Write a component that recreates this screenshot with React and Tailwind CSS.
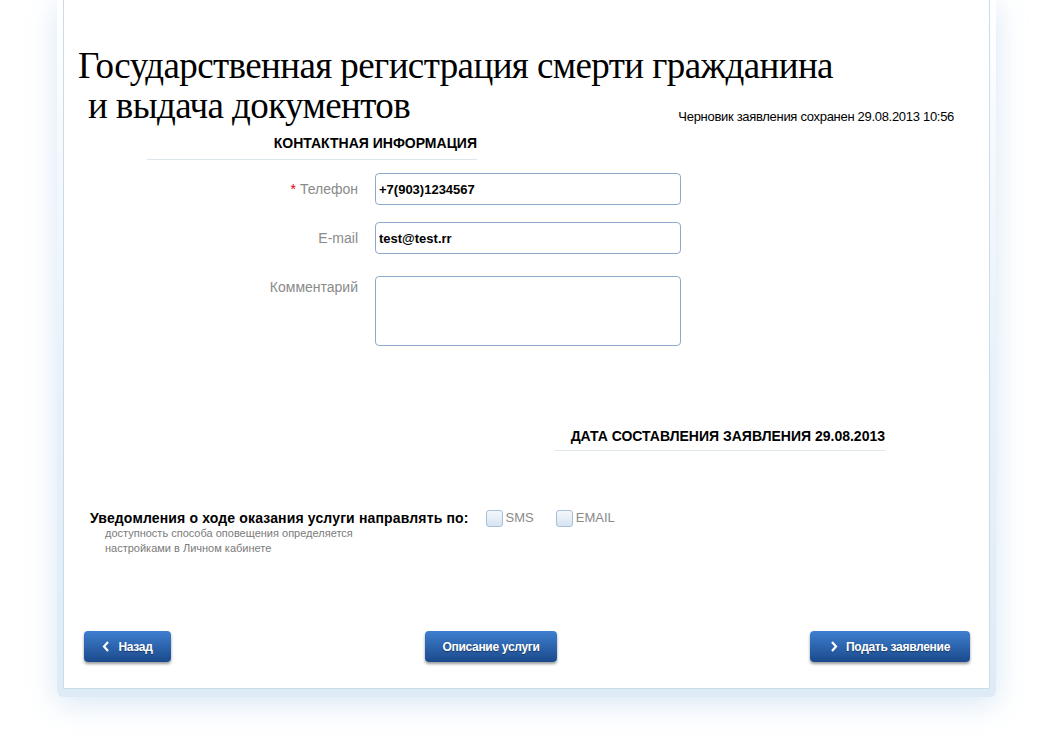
import { useState } from "react";

const sans = "font-['Liberation_Sans',Arial,sans-serif]";

function Chevron({ dir = "left" }) {
  return (
    <svg width="8" height="11" viewBox="0 0 8 11" className="shrink-0">
      <polyline
        points={dir === "left" ? "6,1 2,5.5 6,10" : "2,1 6,5.5 2,10"}
        fill="none"
        stroke="white"
        strokeWidth="2.2"
      />
    </svg>
  );
}

function BlueButton({ children, className = "" }) {
  return (
    <button
      className={`h-[31px] flex items-center justify-center gap-[8px] rounded-[4px] bg-gradient-to-b from-[#3f7fd0] to-[#1b4a8c] text-white text-[12px] font-bold tracking-[-0.3px] shadow-[0_2px_3px_rgba(0,0,0,0.4)] [text-shadow:0_1px_1px_rgba(0,0,0,0.4)] ${className}`}
    >
      {children}
    </button>
  );
}

function Checkbox({ label, checked, onChange }) {
  return (
    <label className="flex items-center gap-[3px] cursor-pointer">
      <span
        onClick={onChange}
        className="w-[17px] h-[17px] rounded-[3px] border border-[#a8bfd8] bg-gradient-to-b from-[#f5f8fc] to-[#d6e3f1] flex items-center justify-center text-[11px] text-[#1b4a8c]"
      >
        {checked ? "✓" : ""}
      </span>
      <span className="text-[13px] leading-[16px] text-[#8a8a8a]">{label}</span>
    </label>
  );
}

export default function App() {
  const [phone, setPhone] = useState("+7(903)1234567");
  const [email, setEmail] = useState("test@test.rr");
  const [sms, setSms] = useState(false);
  const [mail, setMail] = useState(false);

  return (
    <div className={`w-[1043px] h-[742px] bg-white overflow-hidden ${sans}`}>
      {/* outer frame */}
      <div className="ml-[57px] w-[939px] px-[6px] pb-[8px] rounded-b-[6px] bg-gradient-to-b from-white via-[#e9f2fa] to-[#deebf6] shadow-[0_6px_30px_rgba(140,185,225,0.35)]">
        <div className="h-[689px] bg-white border-x border-b border-[#c9dcec] rounded-b-[2px]">
          {/* Title */}
          <div className="pt-[46px] pl-[14px] pr-[35px]">
            <h1 className="whitespace-nowrap font-['Liberation_Serif','Times_New_Roman',serif] text-[37px] leading-[40px] text-black tracking-[-0.6px]">
              Государственная регистрация смерти гражданина
            </h1>
            <div className="flex items-end justify-between">
              <div className="pl-[10px] whitespace-nowrap font-['Liberation_Serif','Times_New_Roman',serif] text-[37px] leading-[40px] text-black tracking-[-0.6px]">
                и выдача документов
              </div>
              <div className="whitespace-nowrap text-[13px] leading-[14px] text-black mb-[2px] tracking-[-0.3px]">
                Черновик заявления сохранен 29.08.2013 10:56
              </div>
            </div>
          </div>

          {/* Contact info header */}
          <div className="ml-[83px] w-[330px] mt-[9px] pb-[8px] border-b border-[#dde6eb] text-right text-[14px] leading-[16px] font-bold text-black">
            КОНТАКТНАЯ ИНФОРМАЦИЯ
          </div>

          {/* Form */}
          <div className="mt-[13px] grid grid-cols-[294px_306px] gap-x-[17px]">
            <div className="text-right text-[14px] leading-[32px] text-[#8a8a8a]">
              <span className="text-[#e00000]">*</span> Телефон
            </div>
            <input
              value={phone}
              onChange={(e) => setPhone(e.target.value)}
              className="h-[32px] rounded-[4px] border border-[#8eaacb] px-[3px] text-[13px] font-bold text-black outline-none"
            />

            <div className="mt-[17px] text-right text-[14px] leading-[32px] text-[#8a8a8a]">
              E-mail
            </div>
            <input
              value={email}
              onChange={(e) => setEmail(e.target.value)}
              className="mt-[17px] h-[32px] rounded-[4px] border border-[#8eaacb] px-[3px] text-[13px] font-bold text-black outline-none"
            />

            <div className="mt-[22px] pt-[3px] text-right text-[14px] leading-[16px] text-[#8a8a8a]">
              Комментарий
            </div>
            <textarea className="mt-[22px] h-[70px] rounded-[4px] border border-[#8eaacb] px-[3px] text-[13px] resize-none outline-none" />
          </div>

          {/* Date header */}
          <div className="ml-[491px] w-[330px] mt-[82px] pb-[6px] border-b border-[#dde6eb] text-right text-[14px] leading-[16px] font-bold text-black">
            ДАТА СОСТАВЛЕНИЯ ЗАЯВЛЕНИЯ 29.08.2013
          </div>

          {/* Notifications */}
          <div className="mt-[59px] pl-[26px]">
            <div className="flex items-center h-[16px]">
              <div className="whitespace-nowrap text-[14px] leading-[16px] font-bold text-black tracking-[0.15px]">
                Уведомления о ходе оказания услуги направлять по:
              </div>
              <div className="ml-[17px] flex items-center gap-[22px]">
                <Checkbox label="SMS" checked={sms} onChange={() => setSms(!sms)} />
                <Checkbox label="EMAIL" checked={mail} onChange={() => setMail(!mail)} />
              </div>
            </div>
            <div className="pl-[15px] text-[11px] leading-[15px] text-[#7a7a7a]">
              доступность способа оповещения определяется
              <br />
              настройками в Личном кабинете
            </div>
          </div>

          {/* Buttons */}
          <div className="mt-[75px] flex pl-[20px] pr-[19px]">
            <BlueButton className="w-[87px]">
              <Chevron dir="left" />
              Назад
            </BlueButton>
            <BlueButton className="ml-[254px] w-[132px]">Описание услуги</BlueButton>
            <BlueButton className="ml-auto w-[160px]">
              <Chevron dir="right" />
              Подать заявление
            </BlueButton>
          </div>
        </div>
      </div>
    </div>
  );
}
